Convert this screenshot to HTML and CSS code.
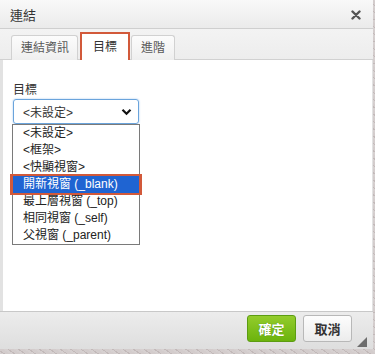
FILE: index.html
```html
<!DOCTYPE html>
<html>
<head>
    <meta charset="utf-8">
    <title>連結</title>
    <link rel="stylesheet" href="styles.css">
</head>
<body>
<div class="dialog">
    <div class="title_bar">
        <span class="title">連結</span>
        <span class="close">
            <svg width="10" height="10" viewBox="0 0 10 10"><path d="M1.5 1.5 L8.5 8.5 M8.5 1.5 L1.5 8.5" stroke="#555" stroke-width="2.4" stroke-linecap="round"/></svg>
        </span>
    </div>
    <div class="tab_bar">
        <div class="tab">連結資訊</div>
        <div class="tab active">目標</div>
        <div class="tab">進階</div>
    </div>
    <div class="contents">
        <div class="field">
            <div class="label">目標</div>
            <div class="select_wrap">
                <div class="select">
                    <span>&lt;未設定&gt;</span>
                    <svg width="11" height="8" viewBox="0 0 11 8"><path d="M1.5 1.8 L5.5 5.8 L9.5 1.8" fill="none" stroke="#111" stroke-width="2.2"/></svg>
                </div>
                <ul class="options">
                    <li>&lt;未設定&gt;</li>
                    <li>&lt;框架&gt;</li>
                    <li>&lt;快顯視窗&gt;</li>
                    <li class="selected">開新視窗 (_blank)</li>
                    <li>最上層視窗 (_top)</li>
                    <li>相同視窗 (_self)</li>
                    <li>父視窗 (_parent)</li>
                </ul>
            </div>
        </div>
    </div>
    <div class="footer">
        <div class="button ok">確定</div>
        <div class="button cancel">取消</div>
        <span class="grip"></span>
    </div>
</div>
</body>
</html>
```

FILE: styles.css
```css
body {
    margin: 0;
    font-family: "Liberation Sans", Arial, "Noto Sans CJK TC", sans-serif;
    color: #333;
    background-color: #cfc7c7;
    background-image: repeating-linear-gradient(35deg, #d6d0d0 0 2px, #c2b9b9 2px 3px, #d3cccc 3px 6px);
    height: 354px;
    overflow: hidden;
}

.dialog {
    width: 373px;
    height: 349px;
    display: flex;
    flex-direction: column;
    background-color: #e2e2e2;
}

.title_bar {
    height: 29px;
    box-sizing: border-box;
    display: flex;
    align-items: center;
    justify-content: space-between;
    padding: 0 12px 0 10px;
    background: linear-gradient(#f9f9f9, #ebebeb);
    border-bottom: 1px solid #cfcfcf;
}

.title {
    font-size: 13px;
    color: #333;
    padding-top: 1px;
}

.close {
    display: flex;
    margin-top: 1px;
}

.tab_bar {
    height: 31px;
    box-sizing: border-box;
    display: flex;
    align-items: flex-end;
    gap: 3px;
    padding: 0 0 0 11px;
    background: linear-gradient(#f3f3f3, #ededed);
    border-bottom: 1px solid #d1d1d1;
}

.tab {
    height: 25px;
    box-sizing: border-box;
    padding: 0 9px;
    font-size: 12px;
    line-height: 25px;
    color: #595959;
    background: linear-gradient(#fcfcfc, #efefef);
    border: 1px solid #d1d1d1;
    border-bottom: none;
    border-radius: 3px 3px 0 0;
    margin-bottom: -1px;
}

.tab:first-child {
    padding: 0 8px 0 9px;
    margin-right: 1px;
}

.tab.active {
    background: #fff;
    color: #333;
    height: 26px;
    padding: 0 10px;
    border-color: #fff;
    border-radius: 0;
    box-shadow: 0 0 0 2px #d2593a;
}

.contents {
    flex: 1;
    background: #fff;
    margin: 0 1px 0 3px;
    padding: 23px 0 0 10px;
}

.label {
    font-size: 12px;
    color: #333;
    line-height: 14px;
    margin-bottom: 2px;
}

.select_wrap {
    position: relative;
    width: 126px;
}

.select {
    height: 25px;
    box-sizing: border-box;
    border: 1px solid #6aa4dc;
    border-radius: 3px;
    display: flex;
    align-items: center;
    justify-content: space-between;
    padding: 0 6px 0 9px;
    font-size: 12px;
    color: #333;
    box-shadow: 0 0 2px #9cc3ec;
}

.options {
    position: absolute;
    top: 25px;
    left: -1px;
    width: 128px;
    box-sizing: border-box;
    margin: 0;
    padding: 0;
    list-style: none;
    background: #fff;
    border: 1px solid #7a7a7a;
    font-size: 12px;
    color: #222;
}

.options li {
    height: 17px;
    line-height: 17px;
    padding-left: 10px;
}

.options li.selected {
    background: #1f64d2;
    color: #fff;
    box-shadow: 0 0 0 2px #d2593a, -1px 0 0 2px #d2593a, 1px 0 0 2px #d2593a;
    position: relative;
}

.footer {
    height: 38px;
    box-sizing: border-box;
    position: relative;
    display: flex;
    justify-content: flex-end;
    align-items: center;
    gap: 7px;
    padding: 0 21px 4px 0;
    background: linear-gradient(#ececec, #dedede);
    border-top: 1px solid #c8c8c8;
}

.button {
    width: 49px;
    height: 27px;
    box-sizing: border-box;
    border-radius: 3px;
    font-size: 13px;
    font-weight: bold;
    display: flex;
    align-items: center;
    justify-content: center;
}

.ok {
    color: #fff;
    background: linear-gradient(#93cc2c, #6bb30d);
    border: 1px solid #5c9c12;
    text-shadow: 0 0 1px #3e7a08;
}

.cancel {
    color: #333;
    background: linear-gradient(#fdfdfd, #ececec);
    border: 1px solid #b8b8b8;
}

.grip {
    position: absolute;
    right: 6px;
    bottom: 2px;
    width: 0;
    height: 0;
    border-left: 10px solid transparent;
    border-bottom: 10px solid #6d6d6d;
}
```
